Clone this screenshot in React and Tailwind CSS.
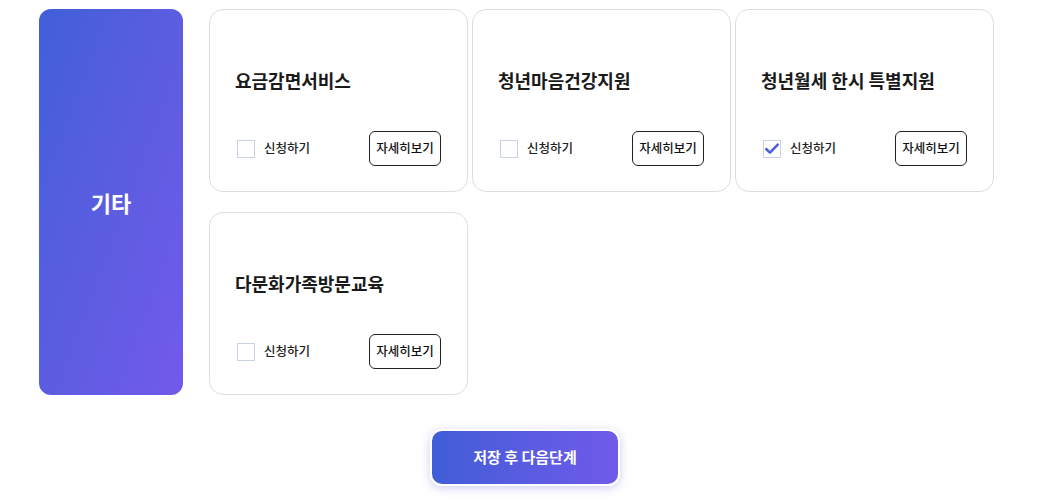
import { useState } from "react";

const items = [
  { id: 1, name: "요금감면서비스", checked: false },
  { id: 2, name: "청년마음건강지원", checked: false },
  { id: 3, name: "청년월세 한시 특별지원", checked: true },
  { id: 4, name: "다문화가족방문교육", checked: false },
];

function Card({ item, onToggle }) {
  return (
    <div className="w-[259px] h-[183px] rounded-[14px] border border-[#dedede] bg-white pl-[25px] pr-[26px] pt-[57px] flex flex-col">
      <h3 className="text-[18px] font-bold text-[#1a1a1a] leading-[26px]">{item.name}</h3>
      <div className="mt-[38px] flex items-center justify-between">
        <label className="flex items-center gap-[9px] cursor-pointer pl-[2px]" onClick={onToggle}>
          <span className="w-[18px] h-[18px] border border-[#c9d1e6] bg-white flex items-center justify-center">
            {item.checked && (
              <svg width="18" height="18" viewBox="0 0 18 18" fill="none">
                <path d="M2.5 9l4.2 4L15.5 4" stroke="#4a5ddc" strokeWidth="2.8" strokeLinecap="round" strokeLinejoin="round" />
              </svg>
            )}
          </span>
          <span className="text-[12.5px] text-[#222] font-medium">신청하기</span>
        </label>
        <button className="w-[72px] h-[35px] rounded-[6px] border border-[#222] text-[12.5px] font-medium text-[#111] bg-white">
          자세히보기
        </button>
      </div>
    </div>
  );
}

export default function App() {
  const [list, setList] = useState(items);
  const toggle = (id) =>
    setList(list.map((it) => (it.id === id ? { ...it, checked: !it.checked } : it)));

  return (
    <div className="w-[1038px] h-[502px] bg-white overflow-hidden font-['Noto_Sans_CJK_KR',sans-serif]">
      <div className="flex pt-[9px] pl-[39px] gap-[26px]">
        <div className="w-[144px] h-[386px] rounded-[12px] bg-gradient-to-br from-[#405fd8] to-[#725aea] flex items-center justify-center">
          <span className="text-white text-[22px] font-bold">기타</span>
        </div>
        <div className="grid grid-cols-[259px_259px_259px] gap-x-[4px] gap-y-[20px] content-start">
          {list.map((it) => (
            <Card key={it.id} item={it} onToggle={() => toggle(it.id)} />
          ))}
        </div>
      </div>
      <div className="flex justify-center mt-[34px] pl-[12px]">
        <button className="w-[190px] h-[57px] rounded-[12px] border-2 border-white bg-gradient-to-r from-[#3f5dd7] to-[#6f5aea] text-white text-[15px] font-bold shadow-[0_2px_10px_rgba(90,90,220,0.3)]">
          저장 후 다음단계
        </button>
      </div>
    </div>
  );
}
